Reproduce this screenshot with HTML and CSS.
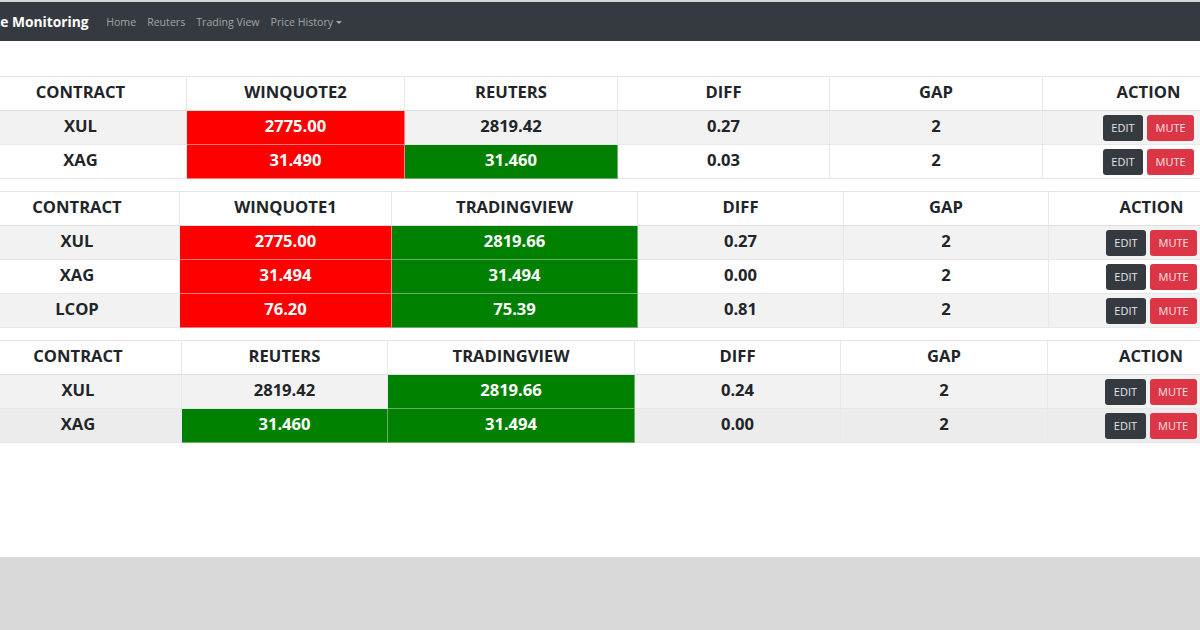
FILE: index.html
```html
<!DOCTYPE html>
<html lang="en">
<head>
    <meta charset="UTF-8">
    <meta name="viewport" content="width=device-width, initial-scale=1.0">
    <title>Price Monitoring</title>
    <link rel="stylesheet" href="styles.css">
</head>
<body>
    <div class="page">
        <nav class="navbar">
            <a class="brand" href="#">Price Monitoring</a>
            <ul class="nav">
                <li><a href="#">Home</a></li>
                <li><a href="#">Reuters</a></li>
                <li><a href="#">Trading View</a></li>
                <li><a href="#" class="dropdown-toggle">Price History</a></li>
            </ul>
        </nav>

        <div class="content">
            <!-- WinQuote2 vs Reuters -->
            <table class="price-table wq2">
                <colgroup>
                    <col><col><col><col><col><col>
                </colgroup>
                <thead>
                    <tr>
                        <th>CONTRACT</th>
                        <th>WINQUOTE2</th>
                        <th>REUTERS</th>
                        <th>DIFF</th>
                        <th>GAP</th>
                        <th>ACTION</th>
                    </tr>
                </thead>
                <tbody>
                    <tr>
                        <td>XUL</td>
                        <td class="down">2775.00</td>
                        <td>2819.42</td>
                        <td>0.27</td>
                        <td>2</td>
                        <td><button class="btn btn-dark">EDIT</button><button class="btn btn-danger">MUTE</button></td>
                    </tr>
                    <tr>
                        <td>XAG</td>
                        <td class="down">31.490</td>
                        <td class="up">31.460</td>
                        <td>0.03</td>
                        <td>2</td>
                        <td><button class="btn btn-dark">EDIT</button><button class="btn btn-danger">MUTE</button></td>
                    </tr>
                </tbody>
            </table>

            <!-- WinQuote1 vs TradingView -->
            <table class="price-table wq1">
                <colgroup>
                    <col><col><col><col><col><col>
                </colgroup>
                <thead>
                    <tr>
                        <th>CONTRACT</th>
                        <th>WINQUOTE1</th>
                        <th>TRADINGVIEW</th>
                        <th>DIFF</th>
                        <th>GAP</th>
                        <th>ACTION</th>
                    </tr>
                </thead>
                <tbody>
                    <tr>
                        <td>XUL</td>
                        <td class="down">2775.00</td>
                        <td class="up">2819.66</td>
                        <td>0.27</td>
                        <td>2</td>
                        <td><button class="btn btn-dark">EDIT</button><button class="btn btn-danger">MUTE</button></td>
                    </tr>
                    <tr>
                        <td>XAG</td>
                        <td class="down">31.494</td>
                        <td class="up">31.494</td>
                        <td>0.00</td>
                        <td>2</td>
                        <td><button class="btn btn-dark">EDIT</button><button class="btn btn-danger">MUTE</button></td>
                    </tr>
                    <tr>
                        <td>LCOP</td>
                        <td class="down">76.20</td>
                        <td class="up">75.39</td>
                        <td>0.81</td>
                        <td>2</td>
                        <td><button class="btn btn-dark">EDIT</button><button class="btn btn-danger">MUTE</button></td>
                    </tr>
                </tbody>
            </table>

            <!-- Reuters vs TradingView -->
            <table class="price-table rt">
                <colgroup>
                    <col><col><col><col><col><col>
                </colgroup>
                <thead>
                    <tr>
                        <th>CONTRACT</th>
                        <th>REUTERS</th>
                        <th>TRADINGVIEW</th>
                        <th>DIFF</th>
                        <th>GAP</th>
                        <th>ACTION</th>
                    </tr>
                </thead>
                <tbody>
                    <tr>
                        <td>XUL</td>
                        <td>2819.42</td>
                        <td class="up">2819.66</td>
                        <td>0.24</td>
                        <td>2</td>
                        <td><button class="btn btn-dark">EDIT</button><button class="btn btn-danger">MUTE</button></td>
                    </tr>
                    <tr class="active">
                        <td>XAG</td>
                        <td class="up">31.460</td>
                        <td class="up">31.494</td>
                        <td>0.00</td>
                        <td>2</td>
                        <td><button class="btn btn-dark">EDIT</button><button class="btn btn-danger">MUTE</button></td>
                    </tr>
                </tbody>
            </table>
        </div>
    </div>
</body>
</html>
```

FILE: styles.css
```css
html {
    background-color: #d9d9d9;
}
body {
    margin: 0;
    font-family: "Open Sans", "Liberation Sans", sans-serif;
    color: #212529;
    overflow: hidden;
}
.page {
    height: 557px;
    background-color: white;
    border-top: 2px solid #d4d4d4;
    box-sizing: border-box;
}
.navbar {
    display: flex;
    align-items: center;
    height: 39px;
    background-color: #343a40;
}
.brand {
    margin-left: -26px;
    margin-right: 12px;
    font-size: 13.8px;
    font-weight: bold;
    color: white;
    text-decoration: none;
    white-space: nowrap;
}
.nav {
    display: flex;
    margin: 0;
    padding: 0;
    list-style: none;
}
.nav a {
    display: block;
    padding: 0 5.5px;
    font-size: 10.6px;
    color: rgba(255,255,255,0.55);
    text-decoration: none;
}
.dropdown-toggle::after {
    content: "";
    display: inline-block;
    margin-left: 3px;
    vertical-align: 2px;
    border-top: 3px solid;
    border-left: 3px solid transparent;
    border-right: 3px solid transparent;
}
.content {
    display: flex;
    flex-direction: column;
    gap: 12px;
    margin-top: 35px;
    margin-left: -26px;
    width: 1280px;
}
.price-table {
    width: 1280px;
    table-layout: fixed;
    border-collapse: collapse;
    border-top: 1px solid #eceeef;
}
.price-table th,
.price-table td {
    height: 30px;
    padding: 0 6px 3px;
    border: 1px solid #e6e8ea;
    border-top-color: #e2e4e6;
    font-size: 16.6px;
    font-weight: bold;
    line-height: 20px;
    text-align: center;
    vertical-align: middle;
    white-space: nowrap;
}
.price-table th {
    border-bottom: 1px solid #dcdfe2;
}
.price-table tbody tr:nth-child(odd) {
    background-color: #f2f2f2;
}
.price-table tbody tr.active {
    background-color: #ececec;
}
.price-table td.down {
    background-color: #ff0000;
    color: white;
    border-color: #ff7a7a;
}
.price-table td.up {
    background-color: #008000;
    color: white;
    border-color: #66b366;
}
.price-table td:last-child {
    padding-bottom: 0;
}

/* column widths per table */
.wq2 col:nth-child(1) { width: 212px; }
.wq2 col:nth-child(2) { width: 218px; }
.wq2 col:nth-child(3) { width: 213px; }
.wq2 col:nth-child(4) { width: 212px; }
.wq2 col:nth-child(5) { width: 213px; }
.wq2 col:nth-child(6) { width: 212px; }

.wq1 col:nth-child(1) { width: 205px; }
.wq1 col:nth-child(2) { width: 212px; }
.wq1 col:nth-child(3) { width: 246px; }
.wq1 col:nth-child(4) { width: 206px; }
.wq1 col:nth-child(5) { width: 205px; }
.wq1 col:nth-child(6) { width: 206px; }

.rt col:nth-child(1) { width: 207px; }
.rt col:nth-child(2) { width: 206px; }
.rt col:nth-child(3) { width: 247px; }
.rt col:nth-child(4) { width: 206px; }
.rt col:nth-child(5) { width: 207px; }
.rt col:nth-child(6) { width: 207px; }

.btn {
    height: 26px;
    padding: 0 8.5px;
    border: none;
    border-radius: 3px;
    font-family: "Open Sans", "Liberation Sans", sans-serif;
    font-size: 11px;
    vertical-align: middle;
    cursor: pointer;
}
.btn + .btn {
    margin-left: 4px;
}
.btn-dark {
    background-color: #343a40;
    color: #e4e5e6;
}
.btn-danger {
    background-color: #dc3545;
    color: #fbe3e5;
}
```
